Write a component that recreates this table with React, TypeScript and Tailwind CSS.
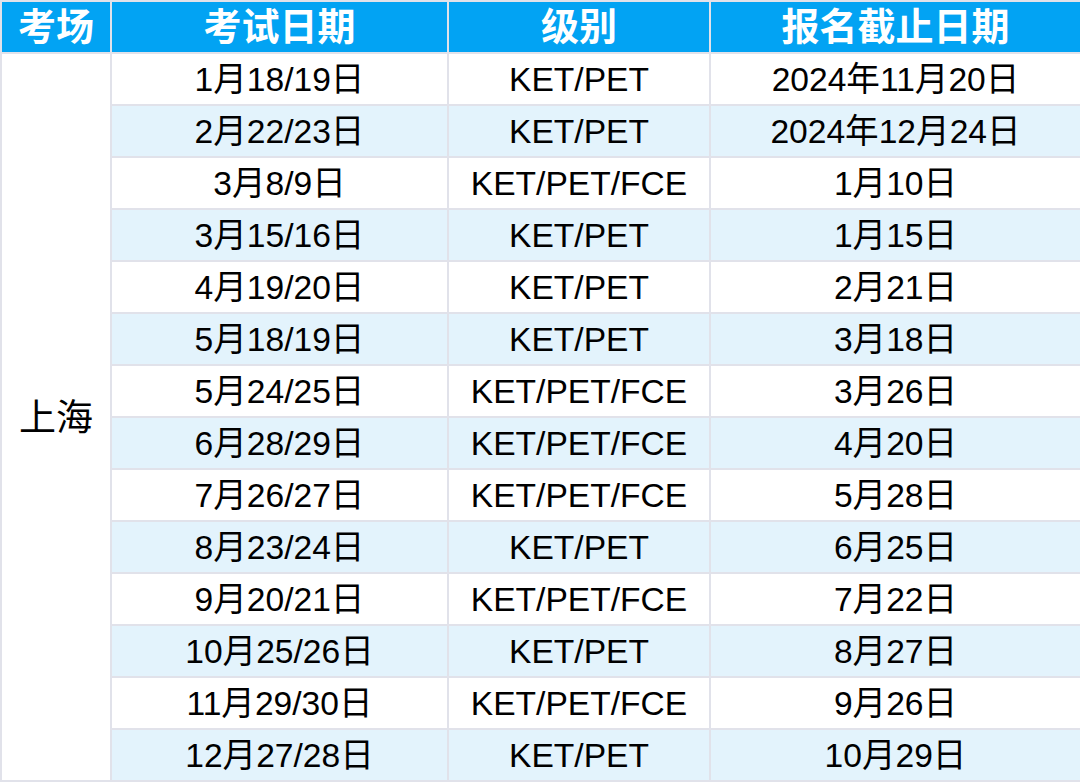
const ROWS: [string, string, string][] = [
  ["1月18/19日", "KET/PET", "2024年11月20日"],
  ["2月22/23日", "KET/PET", "2024年12月24日"],
  ["3月8/9日", "KET/PET/FCE", "1月10日"],
  ["3月15/16日", "KET/PET", "1月15日"],
  ["4月19/20日", "KET/PET", "2月21日"],
  ["5月18/19日", "KET/PET", "3月18日"],
  ["5月24/25日", "KET/PET/FCE", "3月26日"],
  ["6月28/29日", "KET/PET/FCE", "4月20日"],
  ["7月26/27日", "KET/PET/FCE", "5月28日"],
  ["8月23/24日", "KET/PET", "6月25日"],
  ["9月20/21日", "KET/PET/FCE", "7月22日"],
  ["10月25/26日", "KET/PET", "8月27日"],
  ["11月29/30日", "KET/PET/FCE", "9月26日"],
  ["12月27/28日", "KET/PET", "10月29日"],
];

const FONT = "font-['Liberation_Sans','Noto_Sans_CJK_SC',sans-serif]";
const CELL = "border-2 border-[#e1e2ea] text-center align-middle pt-[2px]";

// 上海考场 2025 考试日期表
export default function App() {
  return (
    <div className={`w-[1080px] h-[782px] bg-white ${FONT}`}>
      <table className="w-[1080px] table-fixed border-collapse">
        <colgroup>
          <col className="w-[110px]" />
          <col className="w-[337px]" />
          <col className="w-[262px]" />
          <col className="w-[371px]" />
        </colgroup>
        <thead>
          <tr className="h-[52px] bg-[#02a3f3] text-white text-[38px] font-bold leading-none">
            {["考场", "考试日期", "级别", "报名截止日期"].map((h) => (
              <th key={h} className="border-2 border-[#e1e2ea] text-center align-middle">
                {h}
              </th>
            ))}
          </tr>
        </thead>
        <tbody className="text-[33.6px] text-black leading-none">
          {ROWS.map(([date, level, deadline], i) => (
            <tr key={date} className={`h-[52px] ${i % 2 ? "bg-[#e3f3fc]" : "bg-white"}`}>
              {i === 0 && (
                <td rowSpan={ROWS.length} className={`${CELL} bg-white text-[37px]`}>
                  上海
                </td>
              )}
              <td className={CELL}>{date}</td>
              <td className={CELL}>{level}</td>
              <td className={CELL}>{deadline}</td>
            </tr>
          ))}
        </tbody>
      </table>
    </div>
  );
}
